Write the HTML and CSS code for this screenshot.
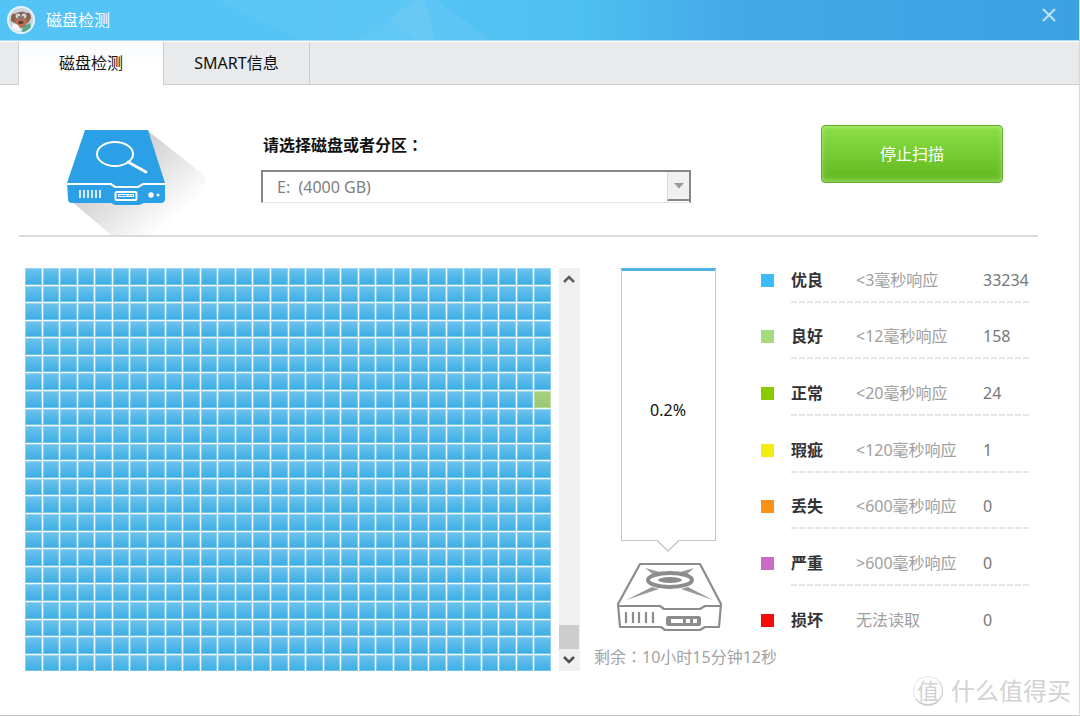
FILE: index.html
```html
<!DOCTYPE html>
<html lang="zh-CN">
<head>
<meta charset="utf-8">
<title>磁盘检测</title>
<link rel="stylesheet" href="styles.css">
</head>
<body>
<div class="window">
  <header class="titlebar">
    <svg class="titlebar-art" viewBox="0 0 1080 40" preserveAspectRatio="none" aria-hidden="true">
      <g fill="#fff">
        <path d="M218 0L300 40H335V0Z" opacity=".05"/>
        <path d="M335 0V40H358L416 0Z" opacity=".05"/>
        <path d="M358 40L416 0H426L435 40Z" opacity=".08"/>
        <path d="M389 19L416 0H426L435 40H415Z" opacity=".05"/>
        <path d="M426 0H436L492 40H435Z" opacity=".06"/>
      </g>
    </svg>
    <svg class="avatar" viewBox="0 0 28 28" aria-hidden="true">
      <circle cx="14" cy="14" r="13" fill="#c9d3dc" stroke="#e4f3fb" stroke-width="2"/>
      <path d="M4 11Q5 6 9 8Q14 4 19 7Q24 6 24 12L21 17Q14 20 8 17L4 15Z" fill="#8d604d"/>
      <path d="M8 13Q14 9 20 13L19 20Q14 24 9 20Z" fill="#b66f52"/>
      <ellipse cx="11" cy="10" rx="3" ry="3" fill="#d5d0cb" stroke="#806b62"/>
      <ellipse cx="17" cy="10" rx="3" ry="3" fill="#d5d0cb" stroke="#806b62"/>
      <circle cx="12" cy="11" r="1" fill="#665"/><circle cx="16" cy="11" r="1" fill="#665"/>
      <path d="M11 16Q14 14 17 16L15 18H12Z" fill="#613c34"/>
      <path d="M16 21L23 17L24 21Q20 26 15 26Z" fill="#58a58c"/>
      <path d="M5 19Q8 16 12 20L14 25Q9 26 5 22Z" fill="#f2f7f8"/>
    </svg>
    <h1 class="title">磁盘检测</h1>
    <button class="close" type="button" aria-label="关闭">
      <svg viewBox="0 0 14 14" width="14" height="14"><path d="M1 1L13 13M13 1L1 13" fill="none" stroke="#bfe2f8" stroke-width="2"/></svg>
    </button>
  </header>

  <nav class="tabs" role="tablist">
    <button class="tab tab-active" type="button" role="tab" aria-selected="true">磁盘检测</button>
    <button class="tab" type="button" role="tab" aria-selected="false">SMART信息</button>
  </nav>

  <section class="target">
    <svg class="disk" viewBox="0 0 138 105" aria-hidden="true">
      <defs>
        <linearGradient id="shade" x1="45" y1="25" x2="105" y2="97" gradientUnits="userSpaceOnUse">
          <stop offset=".15" stop-color="#d2d2d2"/><stop offset=".95" stop-color="#fff"/>
        </linearGradient>
      </defs>
      <path d="M80 0L138 46V105H44L4 71Z" fill="url(#shade)"/>
      <path d="M18 0H81L98 53H0Z" fill="#2ba0e7"/>
      <path d="M0 53H98V70Q97 73 94 73H77L72 75H48L44 73H5Q1 73 1 69Z" fill="#2ba0e7"/>
      <path d="M0 54H44L48 57H71L76 54H98" fill="none" stroke="#fff" stroke-width="2.200"/>
      <ellipse cx="48" cy="24" rx="18" ry="12" fill="none" stroke="#fff" stroke-width="2"/>
      <path d="M61 32L79 42" stroke="#fff" stroke-width="2.800" stroke-linecap="round"/>
      <path d="M13 60V68M17 60V68M21 60V68M25 60V68M29 60V68M33 60V68" stroke="#fff" stroke-width="1.600"/>
      <rect x="48.500" y="62" width="21" height="8" rx="1.500" fill="#2ba0e7" stroke="#fff" stroke-width="2"/>
      <path d="M51 64H67V67H51Z" fill="#fff"/><path d="M52 65.500H60M61.500 65.500H63M64.500 65.500H66" stroke="#2ba0e7"/>
      <circle cx="84" cy="65" r="2.700" fill="#fff"/><circle cx="91" cy="65" r="1.500" fill="#fff"/>
    </svg>
    <div class="field">
      <label class="field-label" for="drive">请选择磁盘或者分区<span class="colon" lang="zh-TW">：</span></label>
      <div class="combo">
        <select class="combo-select" id="drive" disabled>
          <option>E:&nbsp; (4000 GB)</option>
        </select>
        <span class="combo-arrow" aria-hidden="true"><svg viewBox="0 0 10 6" width="10" height="6"><path d="M0 0H10L5 5.500Z" fill="#999"/></svg></span>
      </div>
    </div>
    <button class="stop" type="button">停止扫描</button>
  </section>

  <main class="scan">
    <div class="map-pane">
      <div class="map" id="map" role="img" aria-label="扫描区块"></div>
      <div class="scroll">
        <button class="scroll-button" type="button" aria-label="向上"><svg viewBox="0 0 12 10" width="12" height="10"><path d="M1 8L6 3L11 8" fill="none" stroke="#606060" stroke-width="2.600"/></svg></button>
        <span class="scroll-thumb"></span>
        <button class="scroll-button" type="button" aria-label="向下"><svg viewBox="0 0 12 10" width="12" height="10"><path d="M1 2L6 7L11 2" fill="none" stroke="#505050" stroke-width="2.600"/></svg></button>
      </div>
    </div>

    <div class="progress">
      <div class="gauge">0.2%</div>
      <svg class="notch" viewBox="0 0 22 12" width="22" height="12" aria-hidden="true"><path d="M0 0H22L11 11Z" fill="#fff"/><path d="M0 .5L11 11L22 .5" fill="none" stroke="#c8c8c8" stroke-width="1.500"/></svg>
      <svg class="drive" viewBox="0 0 106 70" width="106" height="70" aria-hidden="true">
        <g fill="none" stroke="#8c8c8c" stroke-width="2.200" stroke-linejoin="round">
          <path d="M23 2H83L104 42L102 65H88L83 68H48L44 65H3L1 42Z"/>
          <path d="M1 44H43L47 47H83L88 44H104"/>
        </g>
        <path d="M28 6L43 10L37 13ZM77 6L63 10L69 13ZM9 38L35 25L42 27ZM96 38L71 25L64 27Z" fill="#999"/>
        <ellipse cx="53" cy="18" rx="22" ry="7" fill="#fff" stroke="#8c8c8c" stroke-width="4"/>
        <ellipse cx="53" cy="18" rx="12" ry="3" fill="#8c8c8c"/>
        <path d="M9 50V61M16 50V61M22 50V61M29 50V61M36 50V61" stroke="#8c8c8c" stroke-width="2.200"/>
        <rect x="49" y="54" width="35" height="10" rx="2.500" fill="#8c8c8c"/>
        <path d="M54 57H66V61H54ZM69 57H73V61H69ZM76 57H80V61H76Z" fill="#fff"/>
      </svg>
      <p class="remaining">剩余<span class="colon" lang="zh-TW">：</span>10小时15分钟12秒</p>
    </div>

    <table class="legend">
      <tbody>
        <tr><td class="key"><span class="swatch excellent"></span></td><th class="name" scope="row">优良</th><td class="rule">&lt;3毫秒响应</td><td class="count">33234</td></tr>
        <tr><td class="key"><span class="swatch good"></span></td><th class="name" scope="row">良好</th><td class="rule">&lt;12毫秒响应</td><td class="count">158</td></tr>
        <tr><td class="key"><span class="swatch normal"></span></td><th class="name" scope="row">正常</th><td class="rule">&lt;20毫秒响应</td><td class="count">24</td></tr>
        <tr><td class="key"><span class="swatch flawed"></span></td><th class="name" scope="row">瑕疵</th><td class="rule">&lt;120毫秒响应</td><td class="count">1</td></tr>
        <tr><td class="key"><span class="swatch lost"></span></td><th class="name" scope="row">丢失</th><td class="rule">&lt;600毫秒响应</td><td class="count">0</td></tr>
        <tr><td class="key"><span class="swatch severe"></span></td><th class="name" scope="row">严重</th><td class="rule">&gt;600毫秒响应</td><td class="count">0</td></tr>
        <tr><td class="key"><span class="swatch damaged"></span></td><th class="name" scope="row">损坏</th><td class="rule">无法读取</td><td class="count">0</td></tr>
      </tbody>
    </table>
  </main>

  <div class="watermark"><span class="seal">值</span><span>什么值得买</span></div>
</div>
<script src="map.js"></script>
</body>
</html>
```
FILE: styles.css
```css
* { box-sizing: border-box; }

body {
  margin: 0;
  background: #fff;
  color: #111;
  font: 16px/24px "Noto Sans", "Noto Sans CJK SC", sans-serif;
}

button, select { font: inherit; }

.window {
  position: relative;
  min-height: 100vh;
  border-right: 1px solid #d8d8d8;
  border-bottom: 1px solid #c8c8c8;
}

/* Full-width colon centred in its cell */
.colon { font-family: "Noto Sans CJK TC", sans-serif; line-height: 16px; }

/* Title bar */
.titlebar {
  position: relative;
  display: flex;
  align-items: center;
  height: 41px;
  padding: 0 23px 0 7px;
  border-bottom: 1px solid #a9daf6;
  background: linear-gradient(90deg, #54c3f5 0, #54c3f5 40%, #4dbff0 54%, #45a9e8 68%, #3ca1e1 100%);
}
.titlebar-art {
  position: absolute;
  inset: 0;
  width: 100%;
  height: 100%;
}
.avatar {
  position: relative;
  width: 28px;
  height: 28px;
}
.title {
  position: relative;
  flex: 1;
  margin: 0 0 0 11px;
  color: #fff;
  font-size: 16px;
  font-weight: 400;
}
.close {
  position: relative;
  display: flex;
  align-self: flex-start;
  margin-top: 8px;
  padding: 0;
  border: 0;
  background: none;
}

/* Tabs */
.tabs {
  display: flex;
  height: 44px;
  padding-left: 18px;
  border-top: 1px solid #fff;
  background: #e8eaec;
  box-shadow: inset 0 -1px #cdcfd1;
}
.tab {
  width: 146px;
  padding: 0 0 2px;
  border: 0;
  border-right: 1px solid #cdcfd1;
  background: none;
  color: #111;
}
.tab-active {
  border-left: 1px solid #cdcfd1;
  background: linear-gradient(#f8fafc, #fff 60%);
}

/* Drive selection */
.target {
  display: flex;
  align-items: flex-start;
  margin: 0 41px 0 19px;
  padding: 40px 35px 0 48px;
  border-bottom: 2px solid #dadada;
}
.disk {
  flex: none;
  width: 138px;
  height: 105px;
  margin-top: 5px;
}
.field {
  flex: 1;
  margin: 8px 130px 0 56px;
}
.field-label {
  display: block;
  margin-bottom: 13px;
  padding-left: 2px;
  font-weight: 700;
}
.combo {
  position: relative;
  height: 33px;
  border: 2px solid #868686;
  border-bottom: 1px solid #e6e6e6;
}
.combo-select {
  width: 100%;
  height: 100%;
  padding: 0 32px 0 14px;
  border: 0;
  appearance: none;
  background: #fff;
  color: #808080;
  opacity: 1;
}
.combo-arrow {
  position: absolute;
  top: 0;
  right: 0;
  display: flex;
  align-items: center;
  justify-content: center;
  width: 22px;
  height: 29px;
  border-left: 1px solid #ddd;
  border-bottom: 2px solid #868686;
  background: #f0f0f0;
}
.stop {
  width: 182px;
  height: 58px;
  padding: 0;
  border: 1px solid #62b32c;
  border-radius: 4px;
  background: linear-gradient(#8de047, #66bd23 85%, #72c433);
  box-shadow: inset 0 0 4px 1px rgba(255, 255, 255, .3);
  color: #fff;
}

/* Scan results */
.scan {
  display: flex;
  align-items: flex-start;
  padding: 31px 48px 44px 25px;
}
.map-pane {
  display: flex;
  flex: 1;
  gap: 8px;
}
.map {
  display: grid;
  flex: 1;
  grid-template-columns: repeat(30, 1fr);
  grid-template-rows: repeat(23, 1fr);
  gap: 1px;
  aspect-ratio: 30 / 23;
  background: #f4fbff;
}
.cell {
  background: linear-gradient(#6fc3ee, #3aade3);
  box-shadow: inset 0 0 0 1px rgba(255, 255, 255, .3);
}
.cell-good { background: linear-gradient(#aad183, #99c673); }
.scroll {
  display: flex;
  flex-direction: column;
  width: 21px;
  background: #f0f0f0;
}
.scroll-button {
  display: flex;
  align-items: center;
  justify-content: center;
  height: 22px;
  padding: 0 1px 0 0;
  border: 0;
  background: none;
}
.scroll-thumb {
  height: 24px;
  margin: auto 1px 0 0;
  background: #cdcdcd;
}

/* Progress column */
.progress {
  display: flex;
  flex-direction: column;
  align-items: center;
  width: 148px;
  margin-left: 14px;
}
.gauge {
  display: flex;
  align-items: center;
  justify-content: center;
  width: 95px;
  height: 273px;
  padding-top: 8px;
  border: 1px solid #c8c8c8;
  border-top: 3px solid #4fb5e5;
}
.notch {
  position: relative;
  margin-top: -1px;
}
.drive { margin: 10px 0 0 3px; }
.remaining {
  align-self: flex-start;
  margin: 13px 0 0;
  color: #a3a3a3;
  white-space: nowrap;
}

/* Legend */
.legend {
  margin-left: 19px;
  border-spacing: 0;
  text-align: left;
}
.legend th, .legend td {
  padding: 22px 0 11px;
  white-space: nowrap;
  background: repeating-linear-gradient(90deg, #e6e6e6 0 6px, transparent 6px 8px) left bottom / 100% 2px no-repeat;
}
.legend tr:first-child > * { padding-top: 0; }
.legend tr:nth-child(3n + 2) > * { padding-top: 21px; }
.legend tr:last-child > *, .legend .key { background: none; }
.key { width: 30px; }
.name { width: 64px; font-weight: 700; color: #333; }
.legend .rule { width: 128px; padding-left: 1px; color: #a0a0a0; }
.legend .count { width: 48px; color: #777; }
.swatch {
  display: block;
  width: 13px;
  height: 13px;
}
.excellent { background: #3dbcf9; }
.good { background: #a7dc7e; }
.normal { background: #8dc900; }
.flawed { background: #f4ec10; }
.lost { background: #fb9217; }
.severe { background: #ca6cc3; }
.damaged { background: #f80b0b; }

.watermark {
  position: absolute;
  right: 8px;
  bottom: 8px;
  display: flex;
  align-items: center;
  gap: 8px;
  color: #d2d2d2;
  font-size: 24px;
  line-height: 32px;
}
.seal {
  width: 30px;
  height: 30px;
  border: 1px solid #e6e6e6;
  border-right-color: #ccc;
  border-bottom: 2px solid #ccc;
  border-radius: 50%;
  font-size: 22px;
  line-height: 27px;
  text-align: center;
}
```
FILE: map.js
```js
const COLUMNS = 30;
const ROWS = 23;
const GOOD_CELLS = new Set([8 * COLUMNS - 1]);
const map = document.getElementById("map");

for (let i = 0; i < COLUMNS * ROWS; i++) {
  const cell = document.createElement("span");
  cell.className = GOOD_CELLS.has(i) ? "cell cell-good" : "cell";
  map.append(cell);
}
```
